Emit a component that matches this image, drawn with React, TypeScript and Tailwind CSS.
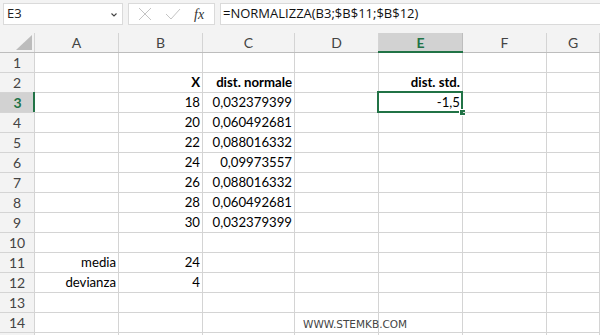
import React from "react";

const cols = ["A", "B", "C", "D", "E", "F", "G"];
const widths = ["w-[84px]", "w-[84px]", "w-[92px]", "w-[84px]", "w-[84px]", "w-[84px]", "flex-1"];

type Cell = { text: string; bold?: boolean };
const data: Record<number, Record<number, Cell>> = {
  2: { 1: { text: "X", bold: true }, 2: { text: "dist. normale", bold: true }, 4: { text: "dist. std.", bold: true } },
  3: { 1: { text: "18" }, 2: { text: "0,032379399" }, 4: { text: "-1,5" } },
  4: { 1: { text: "20" }, 2: { text: "0,060492681" } },
  5: { 1: { text: "22" }, 2: { text: "0,088016332" } },
  6: { 1: { text: "24" }, 2: { text: "0,09973557" } },
  7: { 1: { text: "26" }, 2: { text: "0,088016332" } },
  8: { 1: { text: "28" }, 2: { text: "0,060492681" } },
  9: { 1: { text: "30" }, 2: { text: "0,032379399" } },
  11: { 0: { text: "media" }, 1: { text: "24" } },
  12: { 0: { text: "devianza" }, 1: { text: "4" } },
};

const rows = Array.from({ length: 15 }, (_, i) => i + 1);

export default function App() {
  return (
    <div className="h-[335px] w-[600px] overflow-hidden bg-white font-['Lato',sans-serif] text-[14px] text-black">
      {/* formula bar */}
      <div className="flex h-[33px] items-start gap-[5px] bg-[#f3f3f3] pl-[3px] pt-[3px]">
        <div className="flex h-[22px] w-[120px] items-center justify-between border border-[#dadada] bg-white pl-[3px] pr-[4px] font-['Open_Sans',sans-serif] text-[13px] text-[#222]">
          <span>E3</span>
          <svg width="8" height="6" viewBox="0 0 8 6" className="mt-[1px]">
            <path d="M1.5 1.5 L4 4 L6.5 1.5" fill="none" stroke="#444" strokeWidth="1.1" />
          </svg>
        </div>
        <div className="flex h-[22px] w-[87px] items-center border border-[#dadada] bg-white">
          <svg width="14" height="14" viewBox="0 0 14 14" className="ml-[9px]">
            <path d="M1 1 L13 13 M13 1 L1 13" stroke="#c4c4c4" strokeWidth="1" />
          </svg>
          <svg width="16" height="12" viewBox="0 0 16 12" className="ml-[13px]">
            <path d="M1 6 L6 11 L15 1" fill="none" stroke="#c4c4c4" strokeWidth="1" />
          </svg>
          <span className="ml-[13px] font-['Liberation_Serif',serif] text-[14px] italic text-[#333]">fx</span>
        </div>
        <div className="flex h-[22px] flex-1 items-center border border-r-0 border-[#dadada] bg-white pl-[2px] font-['Open_Sans',sans-serif] text-[13px] text-[#111]">
          =NORMALIZZA(B3;$B$11;$B$12)
        </div>
      </div>

      {/* column headers */}
      <div className="flex h-[20px] border-b border-[#bdbdbd] bg-[#f3f3f3] text-[14px] text-[#444]">
        <div className="relative w-[35px] border-r border-[#d4d4d4]">
          <svg width="16" height="15" viewBox="0 0 16 15" className="absolute bottom-[2px] right-[2px]">
            <path d="M16 0 L16 15 L0 15 Z" fill="#bcbcbc" />
          </svg>
        </div>
        {cols.map((c, i) =>
          c === "E" ? (
            <div
              key={c}
              className={`${widths[i]} relative flex items-center justify-center border-r border-[#bdbdbd] bg-[#d2d2d2] font-bold text-[#217346]`}
            >
              {c}
              <div className="absolute -bottom-[1px] -left-[1px] -right-[1px] h-[2px] bg-[#217346]" />
            </div>
          ) : (
            <div key={c} className={`${widths[i]} flex items-center justify-center border-r border-[#d4d4d4]`}>
              {c}
            </div>
          )
        )}
      </div>

      {/* rows */}
      {rows.map((r) => (
        <div key={r} className={`flex h-[20px] ${r === 3 ? "relative z-10" : ""}`}>
          <div
            className={
              r === 3
                ? "relative flex w-[35px] items-center justify-center border-b border-[#d4d4d4] bg-[#d2d2d2] font-bold text-[#217346]"
                : "flex w-[35px] items-center justify-center border-b border-r border-[#d4d4d4] bg-[#f3f3f3] text-[#444]"
            }
          >
            {r}
            {r === 3 && <div className="absolute -top-[1px] bottom-0 right-0 w-[2px] bg-[#217346]" />}
          </div>
          {cols.map((c, i) => {
            const cell = data[r]?.[i];
            const sel = r === 3 && c === "E";
            return (
              <div
                key={c}
                className={`${widths[i]} relative flex items-center justify-end border-b border-r border-[#d4d4d4] pr-[2px] text-[13.2px] ${cell?.bold ? "font-bold" : ""}`}
              >
                {r === 14 && c === "D" ? (
                  <span className="absolute left-[8px] top-[4px] whitespace-nowrap font-['DejaVu_Sans',sans-serif] text-[10.5px] text-[#444]">
                    WWW.STEMKB.COM
                  </span>
                ) : null}
                {cell?.text}
                {sel && (
                  <>
                    <div className="pointer-events-none absolute -left-[2px] -right-[1px] -top-[2px] bottom-[-1px] border-2 border-[#217346]" />
                    <div className="absolute -bottom-[4px] -right-[4px] h-[7px] w-[7px] border border-white bg-[#217346]" />
                  </>
                )}
              </div>
            );
          })}
        </div>
      ))}
    </div>
  );
}
